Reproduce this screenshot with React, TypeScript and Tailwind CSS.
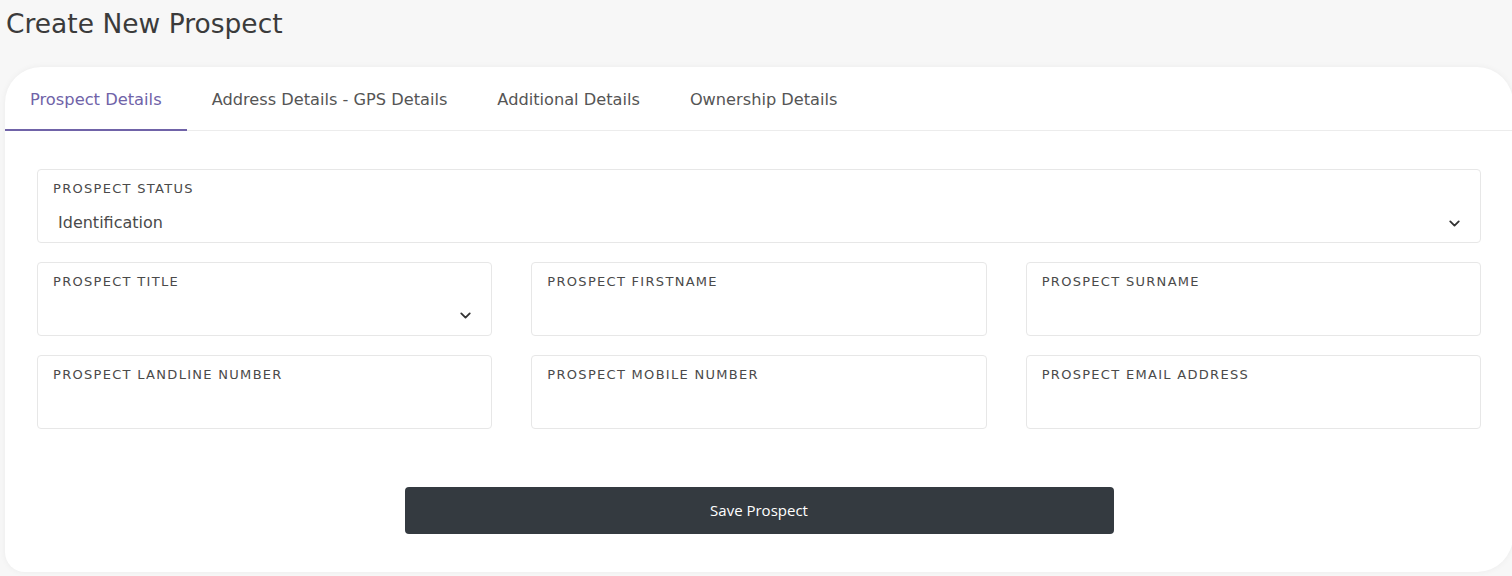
import { ChevronDown } from 'lucide-react';

const font = { fontFamily: '"DejaVu Sans", "Open Sans", sans-serif' };

const tabs = ['Prospect Details', 'Address Details - GPS Details', 'Additional Details', 'Ownership Details'];

function Field({ label, value, select }: { label: string; value?: string; select?: boolean }) {
  return (
    <div className="h-[74px] rounded-[4px] border border-[#e7e7e7] bg-white px-[15px] pt-[11px]">
      <div className="text-[13px] tracking-[1.3px] text-[#4a4a4a] leading-[16px]">{label}</div>
      <div className="mt-[17px] flex items-center justify-between pl-[5px] pr-[2px]">
        <span className="text-[16px] text-[#4a4a4a] leading-[18px]">{value}</span>
        {select && <ChevronDown className="w-[17px] h-[17px] text-[#333]" strokeWidth={2.6} />}
      </div>
    </div>
  );
}

export default function App() {
  return (
    <div className="min-h-[576px] bg-[#f7f7f7] overflow-hidden" style={font}>
      <h1 className="pl-[6px] pt-[8px] text-[26.5px] leading-[32px] text-[#3b3b3b]">Create New Prospect</h1>

      <div className="mt-[27px] ml-[5px] w-[1508px] bg-white rounded-[36px] rounded-bl-[20px] shadow-[0_0_6px_rgba(0,0,0,0.05)] pb-[38px]">
        <div className="flex border-b border-[#ececec] h-[64px]">
          {tabs.map((t, i) => (
            <div
              key={t}
              className={
                i === 0
                  ? 'px-[25px] pt-[21px] text-[16.3px] text-[#7063a8] border-b-2 border-[#7063a8] -mb-px'
                  : 'px-[25px] pt-[21px] text-[16.2px] text-[#555]'
              }
            >
              {t}
            </div>
          ))}
        </div>

        <div className="px-[32px] pt-[38px]">
          <Field label="PROSPECT STATUS" value="Identification" select />
          <div className="grid grid-cols-3 gap-x-[39px] gap-y-[19px] mt-[19px]">
            <Field label="PROSPECT TITLE" select />
            <Field label="PROSPECT FIRSTNAME" />
            <Field label="PROSPECT SURNAME" />
            <Field label="PROSPECT LANDLINE NUMBER" />
            <Field label="PROSPECT MOBILE NUMBER" />
            <Field label="PROSPECT EMAIL ADDRESS" />
          </div>
          <div className="flex justify-center mt-[58px]">
            <button className="w-[709px] h-[47px] rounded-[4px] bg-[#343a40] text-white text-[15px]" style={{ fontFamily: '"Open Sans", sans-serif' }}>
              Save Prospect
            </button>
          </div>
        </div>
      </div>
    </div>
  );
}
